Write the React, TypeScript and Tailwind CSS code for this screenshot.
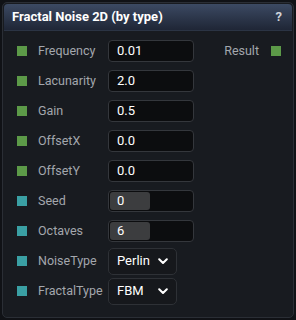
import React from "react";

const Sq = ({ c }: { c: "g" | "t" }) => (
  <div className={`w-[10px] h-[10px] shrink-0 ${c === "g" ? "bg-[#5c9a48]" : "bg-[#3aa0a4]"}`} />
);

const Row = ({ c, label, children, right }: { c: "g" | "t"; label: string; children: React.ReactNode; right?: React.ReactNode }) => (
  <div className="flex items-center h-[30px]">
    <div className="w-[14px]" />
    <Sq c={c} />
    <div className="w-[81px] pl-[11px] text-[12.5px] text-[#a3a7ad]">{label}</div>
    {children}
    {right}
  </div>
);

const Input = ({ v }: { v: string }) => (
  <div className="w-[86px] h-[22px] rounded-[4px] border border-[#34373c] bg-[#0c0d0f] text-[13px] text-white pl-[8px] flex items-center">{v}</div>
);

const Slider = ({ v }: { v: string }) => (
  <div className="w-[86px] h-[22px] rounded-[4px] border border-[#34373c] bg-[#0c0d0f] p-[1px] flex">
    <div className="w-[40px] h-full rounded-[3px] bg-[#3c3d3f] text-[13px] text-white pl-[7px] flex items-center">{v}</div>
  </div>
);

const Chevron = () => (
  <svg width="10" height="7" viewBox="0 0 10 7" fill="none">
    <path d="M1.2 1.2 L5 5 L8.8 1.2" stroke="white" strokeWidth="2" strokeLinecap="round" strokeLinejoin="round" />
  </svg>
);

const Select = ({ v, w }: { v: string; w: string }) => (
  <div className={`h-[27px] rounded-[5px] border border-[#2e3136] bg-[#16181c] text-[13px] text-white pl-[8px] flex items-center ${w}`}>
    <span className="flex-1">{v}</span>
    <span className="pr-[8px]"><Chevron /></span>
  </div>
);

export default function App() {
  return (
    <div className="w-[296px] h-[320px] bg-[#101216] p-[2px]" style={{ fontFamily: "Roboto, 'Noto Sans', sans-serif" }}>
      <div className="w-full h-full rounded-[5px] border border-[#2a2e35] bg-[#181b20] overflow-hidden flex flex-col">
        <div className="h-[27px] mx-[1px] mt-[1px] rounded-t-[4px] bg-gradient-to-b from-[#3c4a63] to-[#1f2636] flex items-center px-[8px] border-b border-[#2b3444]">
          <span className="flex-1 text-[13px] font-bold text-white">Fractal Noise 2D (by type)</span>
          <span className="text-[13px] font-bold text-[#d0d4da] pr-[2px]">?</span>
        </div>
        <div className="flex flex-col pt-[5px]">
          <Row c="g" label="Frequency" right={
            <div className="flex items-center ml-auto pr-[12px]">
              <span className="text-[12.5px] text-[#a3a7ad] mr-[12px]">Result</span>
              <Sq c="g" />
            </div>
          }><Input v="0.01" /></Row>
          <Row c="g" label="Lacunarity"><Input v="2.0" /></Row>
          <Row c="g" label="Gain"><Input v="0.5" /></Row>
          <Row c="g" label="OffsetX"><Input v="0.0" /></Row>
          <Row c="g" label="OffsetY"><Input v="0.0" /></Row>
          <Row c="t" label="Seed"><Slider v="0" /></Row>
          <Row c="t" label="Octaves"><Slider v="6" /></Row>
          <Row c="t" label="NoiseType"><Select v="Perlin" w="w-[69px]" /></Row>
          <Row c="t" label="FractalType"><Select v="FBM" w="w-[69px]" /></Row>
        </div>
      </div>
    </div>
  );
}
